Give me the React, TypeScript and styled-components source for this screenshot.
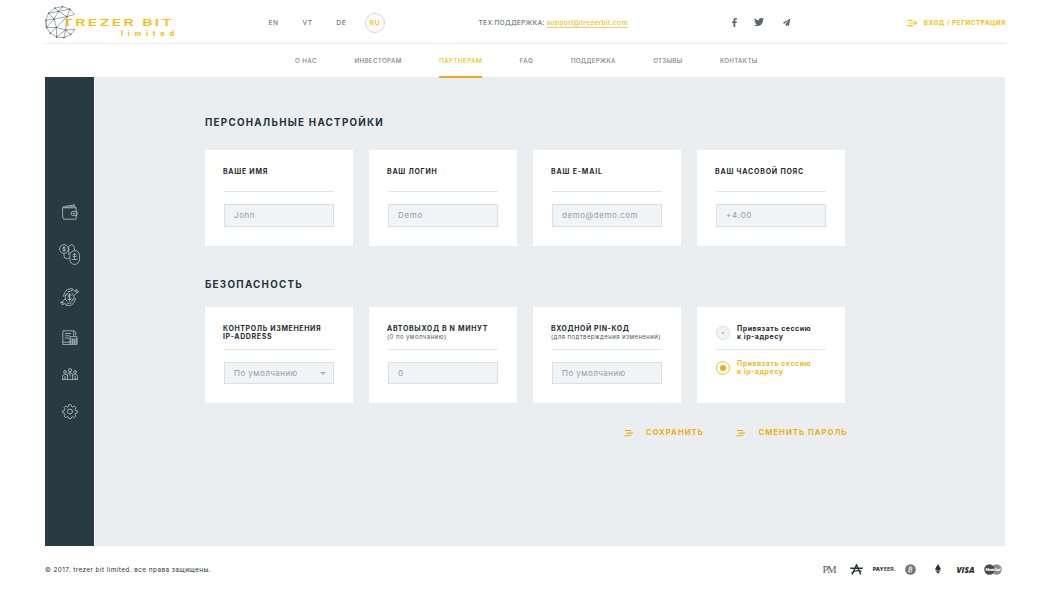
import React from "react";
import styled, { createGlobalStyle } from "styled-components";
import { FaFacebookF, FaTwitter, FaEthereum } from "react-icons/fa";

const GlobalStyle = createGlobalStyle`
  * { box-sizing: border-box; }
  body {
    margin: 0;
    background: #fff;
    font-family: Inter, "Open Sans", sans-serif;
    color: #26333a;
    overflow: hidden;
  }
  a { color: inherit; }
`;

const gold = "#f5bd12";
const deepGold = "#e9b30f";

const Page = styled.div`
  width: 960px;
  height: 590px;
  margin: 0 0 0 45px;
  display: flex;
  flex-direction: column;
`;

/* ---------- header ---------- */

const TopBar = styled.header`
  height: 44px;
  flex: none;
  display: flex;
  align-items: center;
  border-bottom: 1px solid #e9e9e9;
  font-size: 6.7px;
  font-weight: 500;
  line-height: 10px;
  color: #6f797d;
  white-space: nowrap;
  padding-top: 3px;
`;

const Logo = styled.svg`
  width: 131px;
  height: 36px;
  flex: none;
`;

const Languages = styled.div`
  display: flex;
  align-items: center;
  width: 210px;
  padding-left: 92.5px;
  gap: 23.7px;
  letter-spacing: 0.55px;
  flex: none;
`;

const CurrentLanguage = styled.span`
  width: 20px;
  height: 20px;
  margin-left: -5px;
  border: 1px solid #d6d6d2;
  border-radius: 50%;
  display: flex;
  align-items: center;
  justify-content: center;
  color: ${gold};
  font-weight: 600;
  flex: none;
`;

const Support = styled.div`
  margin-left: 92.5px;
  width: 150px;
  letter-spacing: 0.25px;
  flex: none;
`;

const MailLink = styled.a`
  color: ${gold};
  letter-spacing: 0.32px;
  text-decoration: none;
  border-bottom: 1px solid #f3cf63;
`;

const Social = styled.div`
  margin-left: 101px;
  display: flex;
  align-items: center;
  gap: 15.5px;
  color: #58666b;
  margin-top: -2px;
  svg { display: block; }
`;

const Login = styled.a`
  margin-left: auto;
  display: flex;
  align-items: center;
  gap: 7px;
  font-size: 6.2px;
  font-weight: 800;
  letter-spacing: 0.64px;
  margin-right: -1px;
  color: #fac51c;
`;

const Nav = styled.nav`
  height: 33px;
  flex: none;
  display: flex;
  padding-left: 250px;
  gap: 37.5px;
  font-size: 6.2px;
  font-weight: 500;
  line-height: 33px;
  color: #7a8386;
  white-space: nowrap;
`;

const NavItem = styled.a<{ $active?: boolean; $spacing?: number }>`
  height: ${(p) => (p.$active ? 34 : 33)}px;
  position: relative;
  z-index: 1;
  letter-spacing: ${(p) => p.$spacing ?? 0.33}px;
  color: ${(p) => (p.$active ? gold : "inherit")};
  border-bottom: ${(p) => (p.$active ? "2px solid #e9ac18" : "0")};
`;

/* ---------- body ---------- */

const Body = styled.div`
  height: 469px;
  flex: none;
  display: flex;
  background: #eaeef1;
`;

const Sidebar = styled.aside`
  width: 50px;
  border-right: 1px solid #f6f8f9;
  background: #293a42;
  background-clip: padding-box;
  display: flex;
  flex-direction: column;
  align-items: center;
  justify-content: center;
  gap: 23.3px;
`;

const SideIcon = styled.svg`
  display: block;
  flex: none;
  fill: none;
  stroke: #b3bcc0;
  stroke-width: 0.85;
  stroke-linecap: round;
  stroke-linejoin: round;
`;

const Content = styled.main`
  width: 641px;
  margin-left: 110px;
  padding-top: 37.5px;
`;

const Heading = styled.h2<{ $spacing: number; $top?: number }>`
  margin: ${(p) => p.$top ?? 0}px 0 0;
  font-size: 9.8px;
  line-height: 15px;
  font-weight: 700;
  letter-spacing: ${(p) => p.$spacing}px;
`;

const Cards = styled.div<{ $top: number }>`
  display: grid;
  grid-template-columns: repeat(4, 148px);
  column-gap: 16px;
  margin-top: ${(p) => p.$top}px;
`;

const Card = styled.section`
  height: 96px;
  background: #fff;
  padding: 18px 18px 0;
  white-space: nowrap;
`;

const CardHead = styled.div<{ $dense?: boolean }>`
  height: ${(p) => (p.$dense ? 24 : 23.5)}px;
`;

const Title = styled.h3<{ $spacing: number }>`
  margin: 0;
  font-size: 7px;
  line-height: 8px;
  font-weight: 700;
  letter-spacing: ${(p) => p.$spacing + 0.2}px;
  color: #1f2b31;
`;

const Hint = styled.div`
  font-size: 6px;
  line-height: 7px;
  letter-spacing: 0.43px;
  color: #4b565b;
`;

const Divider = styled.div`
  height: 1px;
  width: 110px;
  margin-left: 1px;
  background: #e3e6e8;
`;

const Field = styled.div<{ $spacing: number; $dense?: boolean }>`
  width: 110px;
  height: ${(p) => (p.$dense ? 22 : 23)}px;
  margin: 12px 0 0 1px;
  padding: 0 7px ${(p) => (p.$dense ? 0 : 1)}px 9px;
  border: 1px solid #d9e0e3;
  background: #f0f4f7;
  display: flex;
  align-items: center;
  justify-content: space-between;
  font-size: 8px;
  letter-spacing: ${(p) => p.$spacing + 0.18}px;
  color: #949c9f;
`;

const Caret = styled.span`
  border: 3.5px solid transparent;
  border-top-color: #aab2b5;
  border-bottom: 0;
`;

const Option = styled.div<{ $on?: boolean }>`
  display: flex;
  align-items: center;
  gap: 7px;
  height: 16px;
  margin: ${(p) => (p.$on ? 10 : 0)}px 0 0 1px;
  font-size: 7px;
  line-height: 8px;
  font-weight: 700;
  letter-spacing: 0.5px;
  color: ${(p) => (p.$on ? "#efb91c" : "#1f2b31")};
`;

const Radio = styled.span<{ $on?: boolean }>`
  width: 14px;
  height: 14px;
  border-radius: 50%;
  flex: none;
  display: flex;
  align-items: center;
  justify-content: center;
  border: 1px solid ${(p) => (p.$on ? "#efbd2c" : "#d5dce0")};
  background: ${(p) => (p.$on ? "#fff" : "#f0f4f7")};
  &::after {
    content: "";
    width: ${(p) => (p.$on ? 6 : 2)}px;
    height: ${(p) => (p.$on ? 6 : 2)}px;
    border-radius: 50%;
    background: ${(p) => (p.$on ? "#e9ad10" : "#a5afb4")};
  }
`;

const Actions = styled.div`
  display: flex;
  justify-content: flex-end;
  gap: 32.5px;
  margin: 23px -1.5px 0 0;
`;

const Action = styled.a`
  display: flex;
  align-items: center;
  gap: 12px;
  font-size: 7.8px;
  line-height: 13px;
  font-weight: 700;
  letter-spacing: 0.97px;
  color: ${deepGold};
  white-space: nowrap;
`;

/* ---------- footer ---------- */

const Footer = styled.footer`
  height: 44px;
  padding-top: 3px;
  display: flex;
  align-items: center;
  justify-content: space-between;
`;

const Copyright = styled.span`
  font-size: 6.4px;
  letter-spacing: 0.44px;
  color: #2d3335;
`;

const Payments = styled.div`
  display: flex;
  margin: -1px -1.5px 0 0;
`;

const Payment = styled.span`
  width: 27.3px;
  height: 14px;
  display: flex;
  align-items: center;
  justify-content: center;
  color: #2c2f31;
`;

const PerfectMoney = styled.span`
  font: 10.5px "Liberation Serif", serif;
  letter-spacing: -0.9px;
  color: #555;
`;

const Payeer = styled.span`
  font: 800 5.4px Inter, sans-serif;
  letter-spacing: 0;
  padding-left: 1px;
  span { font-weight: 700; color: #555; }
`;

const Visa = styled.span`
  font: italic 800 8.3px "Open Sans", sans-serif;
  letter-spacing: 0;
`;

const EntryIcon = ({ color }: { color: string }) => (
  <svg width="10" height="8" viewBox="0 0 10 8" fill="none" stroke={color} strokeWidth="1.1">
    <path d="M.6 1.4h5M.2 6.6h5.8M1.8 4h7.6M7.4 2l2 2-2 2" />
  </svg>
);

const DashesIcon = ({ color }: { color: string }) => (
  <svg width="10" height="8" viewBox="0 0 10 8" fill="none" stroke={color} strokeWidth="1.1">
    <path d="M1 1.5h4.8l1.2.8M2.6 4.1h6.2M.4 6.7h5.8l1-.8" />
  </svg>
);

const nodes = [
  [10, 3], [17.5, 1.8], [25, 4.2], [3.6, 8.2], [13.4, 6.4],
  [9, 14], [1, 15.2], [1.6, 22.5], [11.4, 22.4], [22, 11.6],
  [5.4, 28.2], [11.6, 32], [20.6, 25], [19, 32.4], [25.6, 29.4],
];

const LogoMark = () => (
  <Logo viewBox="0 0 131 36">
    <g fill="none" stroke="#5c717b" strokeWidth="0.6" strokeLinejoin="round">
      <path d="M29.6 9.4L25 4.2 17.5 1.6 10 3 3.6 8.2 .8 15.2 1.4 22.5 5.4 28.2 11.6 32 19 32.6 25.6 29.4 30 24.4" />
      <path d="M10 3l3.4 3.4L17.5 1.6M13.4 6.4L25 4.2 22 11.6zM13.4 6.4L3.6 8.2 9 14zM9 14L.8 15.2 1.4 22.5zM9 14l13-2.4M9 14l2.4 8.4L1.4 22.5M11.4 22.4L22 11.6l7.6-2.2M11.4 22.4L5.4 28.2M11.4 22.4L11.6 32M11.4 22.4L20.6 25 22 11.6M20.6 25l-9 7M20.6 25L19 32.6M20.6 25l5 4.4M20.6 25l9.4-.6" />
    </g>
    <g fill="#3f5661">
      {nodes.map(([x, y]) => (
        <circle key={`${x}-${y}`} cx={x} cy={y} r="0.75" />
      ))}
    </g>
    <text x="17.6" y="20.6" textLength="111.5" lengthAdjust="spacingAndGlyphs" fontFamily="Inter, sans-serif" fontWeight="600" fontSize="9.6" letterSpacing="1.4" fill="#fdbf12">
      TREZER BIT
    </text>
    <text x="76" y="31.2" textLength="53" fontFamily="Inter, sans-serif" fontWeight="800" fontSize="7.2" fill="#fdbf12">
      limited
    </text>
  </Logo>
);

const personal: [string, number, string, number][] = [
  ["ВАШЕ ИМЯ", 0.53, "John", 0.4],
  ["ВАШ ЛОГИН", 0.55, "Demo", 0.5],
  ["ВАШ E-MAIL", 0.61, "demo@demo.com", 0.36],
  ["ВАШ ЧАСОВОЙ ПОЯС", 0.59, "+4:00", 0.45],
];

export default function App() {
  return (
    <>
      <GlobalStyle />
      <Page>
        <TopBar>
          <LogoMark />
          <Languages>
            <span>EN</span>
            <span>VT</span>
            <span>DE</span>
            <CurrentLanguage>RU</CurrentLanguage>
          </Languages>
          <Support>
            ТЕХ ПОДДЕРЖКА: <MailLink>support@trezerbit.com</MailLink>
          </Support>
          <Social>
            <FaFacebookF size={9} />
            <FaTwitter size={10} />
            <svg width="12" height="9" viewBox="-2.2 0 12 9" fill="currentColor">
              <path d="M8.2.4L.4 4.9l1.9.9 4.4-3.7-3.3 4.2v2.3l1.3-1.5 2 .9z" />
            </svg>
          </Social>
          <Login>
            <EntryIcon color="#fac51c" />
            ВХОД / РЕГИСТРАЦИЯ
          </Login>
        </TopBar>

        <Nav>
          <NavItem $spacing={0.44}>О НАС</NavItem>
          <NavItem $spacing={0.35}>ИНВЕСТОРАМ</NavItem>
          <NavItem $active $spacing={0.45}>ПАРТНЕРАМ</NavItem>
          <NavItem $spacing={0.6}>FAQ</NavItem>
          <NavItem $spacing={0.27}>ПОДДЕРЖКА</NavItem>
          <NavItem $spacing={0.27}>ОТЗЫВЫ</NavItem>
          <NavItem>КОНТАКТЫ</NavItem>
        </Nav>

        <Body>
          <Sidebar>
            <SideIcon width="16" height="16" viewBox="0 0 16 16">
              <path d="M.8 3.8h13.4v11.4H2Q.8 15.2.8 14zM.8 3.8Q1 2.6 2.2 2.5L12.6.8l.5 3M3.2 3.6l9-1.4M14.2 7.4h-3a2.1 2.1 0 0 0 0 4.2h3.2q.8 0 .8-.8V8.2q0-.8-1-.8" />
              <circle cx="11.6" cy="9.5" r=".5" />
            </SideIcon>
            <SideIcon width="21" height="21" viewBox="0 0 21 21">
              <circle cx="5" cy="5" r="4.4" />
              <path d="M6.3 3.7Q5 2.7 4 3.5T5 5t.9 1.5T3.7 6.3M5 2.4v5.2M9.8 10.6V3.4q.2-2.6 2.7-2.7t2.8 2.7v2M5 9.6v2.5q.3 2.6 2.8 2.7 1.4 0 2.2-.9" />
              <rect x="10.8" y="6.6" width="9.6" height="13.8" rx="4.8" />
              <path d="M13.2 15.4h4.8M14.2 12.5h2.8M15.6 9.8v5.6M14 10.8l1.6-1.2 1.5 1.2" />
            </SideIcon>
            <SideIcon width="21" height="18.5" viewBox="0 0 21 18.5">
              <path d="M7 6.2a4.6 4.6 0 0 0 1 7M14 12.3a4.6 4.6 0 0 0-1-7" />
              <path d="M12.3 7.2q-1.6-1.3-3-.3t1.2 2.3 1.2 2.3-3-.3M10.5 5.6v7.2" />
              <path d="M4.4 8.2Q4.8 4.4 8.4 1.4l5-.8.8 1.2-3.4 1.6H9M6.6 7.6L8.8 5M14.8 3l3.4-1.4-1.6 2.6 3.2-.6-3 2.2-1.6 1.4" />
              <path d="M16.600 10.300Q16.200 14.100 12.600 17.100l-5 .8-.8-1.200 3.400-1.600H12M14.400 10.900l-2.200 2.600M6.200 15.500l-3.400 1.400 1.600-2.600-3.200.6 3-2.200 1.600-1.400" />
            </SideIcon>
            <SideIcon width="16" height="15.5" viewBox="0 0 16 15.5">
              <path d="M8.2 14.6H.9V.8h10.8v4.7M11.7.8l2 1.2v3.2M.9 12.2h7.3M3.2 3.5h5.6M3.2 5.8h4M3.2 8h4" />
              <path d="M8.4 6.6h6.6v8.2H8.4zM8.4 9.2H15M10.6 9.2v5.6M12.8 9.2v5.6M8.4 11.2H15M8.4 13H15" />
            </SideIcon>
            <SideIcon width="16" height="12" viewBox="0 0 16 12">
              <circle cx="8" cy="2.1" r="1.6" />
              <circle cx="3" cy="3.9" r="1.4" />
              <circle cx="13" cy="3.9" r="1.4" />
              <path d="M5.4 11.4V6.8Q5.6 4.6 8 4.5q2.4.1 2.6 2.3v4.6M.7 11.4V8.2Q.9 6.2 3 6.1q1.6.1 2.4 1.4M15.3 11.4V8.2Q15.1 6.2 13 6.1q-1.6.1-2.4 1.4M.5 11.4h15M8 5v3.4M3 8.4v3M13 8.4v3" />
            </SideIcon>
            <SideIcon width="16" height="15" viewBox="0 0 16 15">
              <circle cx="8" cy="7.5" r="2.5" />
              <path d="M6.8.7h2.4l.4 1.8 1.2.5 1.6-1 1.6 1.7-1 1.5.5 1.2 1.8.4v2.1l-1.8.4-.5 1.2 1 1.5-1.6 1.7-1.6-1-1.2.5-.4 1.3H6.8l-.4-1.3-1.2-.5-1.6 1L2 12l1-1.5-.5-1.2L.7 8.9V6.8l1.8-.4L3 5.2 2 3.7 3.6 2l1.6 1 1.2-.5z" />
            </SideIcon>
          </Sidebar>

          <Content>
            <Heading $spacing={1.26}>ПЕРСОНАЛЬНЫЕ НАСТРОЙКИ</Heading>
            <Cards $top={20}>
              {personal.map(([title, titleSpacing, value, valueSpacing]) => (
                <Card key={title}>
                  <CardHead>
                    <Title $spacing={titleSpacing}>{title}</Title>
                  </CardHead>
                  <Divider />
                  <Field $spacing={valueSpacing}>{value}</Field>
                </Card>
              ))}
            </Cards>

            <Heading $spacing={1.28} $top={31}>БЕЗОПАСНОСТЬ</Heading>
            <Cards $top={15.5}>
              <Card>
                <CardHead $dense>
                  <Title $spacing={0.44}>
                    КОНТРОЛЬ ИЗМЕНЕНИЯ
                    <br />
                    IP-ADDRESS
                  </Title>
                </CardHead>
                <Divider />
                <Field $dense $spacing={0.27}>
                  По умолчанию <Caret />
                </Field>
              </Card>
              <Card>
                <CardHead $dense>
                  <Title $spacing={0.47}>АВТОВЫХОД В N МИНУТ</Title>
                  <Hint>(0 по умолчанию)</Hint>
                </CardHead>
                <Divider />
                <Field $dense $spacing={0.27}>0</Field>
              </Card>
              <Card>
                <CardHead $dense>
                  <Title $spacing={0.37}>ВХОДНОЙ PIN-КОД</Title>
                  <Hint>(для подтверждения изменений)</Hint>
                </CardHead>
                <Divider />
                <Field $dense $spacing={0.27}>По умолчанию</Field>
              </Card>
              <Card>
                <CardHead $dense>
                  <Option>
                    <Radio />
                    <span>
                      Привязать сессию
                      <br />к ip-адресу
                    </span>
                  </Option>
                </CardHead>
                <Divider />
                <Option $on>
                  <Radio $on />
                  <span>
                    Привязать сессию
                    <br />к ip-адресу
                  </span>
                </Option>
              </Card>
            </Cards>

            <Actions>
              <Action>
                <DashesIcon color={deepGold} />
                СОХРАНИТЬ
              </Action>
              <Action>
                <DashesIcon color={deepGold} />
                СМЕНИТЬ ПАРОЛЬ
              </Action>
            </Actions>
          </Content>
        </Body>

        <Footer>
          <Copyright>© 2017. trezer bit limited. все права защищены.</Copyright>
          <Payments>
            <Payment>
              <PerfectMoney>PM</PerfectMoney>
            </Payment>
            <Payment>
              <svg width="13" height="11" viewBox="0 0 13 11" fill="none" stroke="#2c2f31" strokeWidth="1.4">
                <path d="M.3 4.3h12.4M2.2 10.5L6.5.8l4.3 9.7M1.5 9.2Q6 5.2 11.5 7.4" />
              </svg>
            </Payment>
            <Payment>
              <Payeer>
                PAY<span>EER.</span>
              </Payeer>
            </Payment>
            <Payment>
              <svg width="11" height="11" viewBox="0 0 11 11">
                <circle cx="5.5" cy="5.5" r="5.3" fill="#747474" />
                <path d="M4.6 2.9h1.3q1.3.1 1.1 1.3-.2 1-1.4 1.1 1.5.1 1.3 1.3-.2 1.3-1.6 1.4H3.7l.9-5.1M4.3 5.3h1.4" fill="none" stroke="#fff" strokeWidth=".9" />
              </svg>
            </Payment>
            <Payment>
              <FaEthereum size={10} />
            </Payment>
            <Payment>
              <Visa>VISA</Visa>
            </Payment>
            <Payment>
              <svg width="18" height="11" viewBox="0 0 18 11">
                <circle cx="12.6" cy="5.5" r="5.2" fill="#8d8d8d" />
                <circle cx="5.4" cy="5.5" r="5.2" fill="#4a4a4a" />
                <text x="1.6" y="6.9" fontFamily="Inter, sans-serif" fontStyle="italic" fontWeight="700" fontSize="3.6" textLength="14.8" fill="#fff">
                  MasterCard
                </text>
              </svg>
            </Payment>
          </Payments>
        </Footer>
      </Page>
    </>
  );
}
